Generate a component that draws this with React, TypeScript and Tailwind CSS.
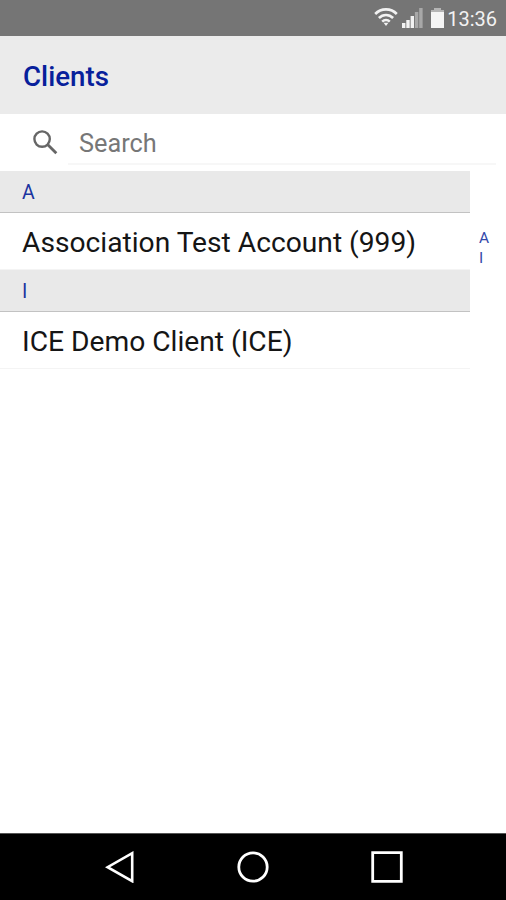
import React from "react";

function StatusBar() {
  return (
    <header className="flex h-9 shrink-0 items-start justify-end bg-[#757575] pr-[9px] text-[#f2f2f2]">
      <svg className="mt-[7px] h-[20px] w-[24px]" viewBox="0 0 24 20" fill="none" stroke="#f2f2f2" strokeWidth="2.6">
        <path d="M1.2 7C7 .8 17 .8 22.8 7" />
        <path d="M4.9 11C9 6.9 15 6.9 19.1 11" />
        <path d="M8.2 14.6C10.4 12.5 13.6 12.5 15.8 14.6" />
        <path d="M9.6 15.8h4.8L12 19z" fill="#f2f2f2" stroke="none" />
      </svg>
      <svg className="mt-[7px] ml-1 h-[21px] w-[21px]" viewBox="0 0 21 21">
        <path d="M0 16h3.4v5H0zM4.3 13h3.4v8H4.3zM8.6 9H12v12H8.6z" fill="#f2f2f2" />
        <path d="M12.9 5h3.4v16h-3.4zM17.2 1h3.4v20h-3.4z" fill="#a8a8a8" />
      </svg>
      <svg className="mt-[8px] ml-2 h-[20px] w-[13px]" viewBox="0 0 13 20">
        <path d="M3 0h7v2h3v3H0V2h3z" fill="#b5b5b5" />
        <path d="M0 4h13v16H0z" fill="#f5f5f5" />
      </svg>
      <time className="mt-[7px] ml-[3px] text-[20px] leading-6">13:36</time>
    </header>
  );
}

function SearchField() {
  return (
    <label className="flex h-[57px] items-start pr-[10px] pl-[33px]">
      <svg className="mt-[15.5px] h-[25px] w-[25px] shrink-0" viewBox="0 0 25 25" fill="none" stroke="#666" strokeWidth="2.4">
        <circle cx="9.1" cy="9.1" r="7.7" />
        <path d="m14.8 14.8 8.5 8.5" strokeWidth="2.8" />
      </svg>
      <span className="ml-[10px] h-[51px] flex-1 border-b-2 border-[#f7f7f7] pt-[14px] pl-[11px] text-[25.3px] leading-8 text-[#777]">
        Search
      </span>
    </label>
  );
}

const groups = [
  { letter: "A", name: "Association Test Account (999)" },
  { letter: "I", name: "ICE Demo Client (ICE)" },
];

function ClientList() {
  return (
    <main className="flex flex-1">
      <div className="w-[470px]">
        {groups.map((group) => (
          <section key={group.letter}>
            <h2 className="h-[42px] border-b border-[#c2c2c2] bg-[#e9e9e9] pl-[22px] text-[19.5px] leading-[43px] text-[#1b34a0]">
              {group.letter}
            </h2>
            <p className="h-[57px] border-b border-[#f4f4f4] pl-[22px] text-[28.2px] leading-[59px] whitespace-nowrap text-[#151515]">
              {group.name}
            </p>
          </section>
        ))}
      </div>
      <nav className="flex flex-col pt-[57px] pl-[9px] text-[15.5px] leading-5 text-[#3349aa]">
        {groups.map((group) => (
          <span key={group.letter}>{group.letter}</span>
        ))}
      </nav>
    </main>
  );
}

function NavigationBar() {
  return (
    <footer className="flex h-[67px] shrink-0 items-start border-t border-[#555] bg-black pt-[17px] pl-[105px]">
      <svg className="h-8 w-[30px]" viewBox="0 0 30 32" fill="none" stroke="white" strokeWidth="2.6">
        <path d="M27.2 2.2v28L2.6 16.2z" />
      </svg>
      <svg className="ml-[102px] h-8 w-8" viewBox="0 0 32 32" fill="none" stroke="white" strokeWidth="2.8">
        <circle cx="16" cy="16" r="14.2" />
      </svg>
      <svg className="ml-[102px] h-8 w-8" viewBox="0 0 32 32" fill="none" stroke="white" strokeWidth="2.8">
        <path d="M1.7 1.7h28.6v28.6H1.7z" />
      </svg>
    </footer>
  );
}

export default function App() {
  return (
    <div className="flex h-[900px] w-[506px] flex-col overflow-hidden bg-white font-[Roboto,sans-serif]">
      <StatusBar />
      <h1 className="h-[78px] shrink-0 bg-[#ebebeb] pl-[23px] text-[27.7px] leading-[82px] font-medium text-[#07209b]">Clients</h1>
      <SearchField />
      <ClientList />
      <NavigationBar />
    </div>
  );
}
